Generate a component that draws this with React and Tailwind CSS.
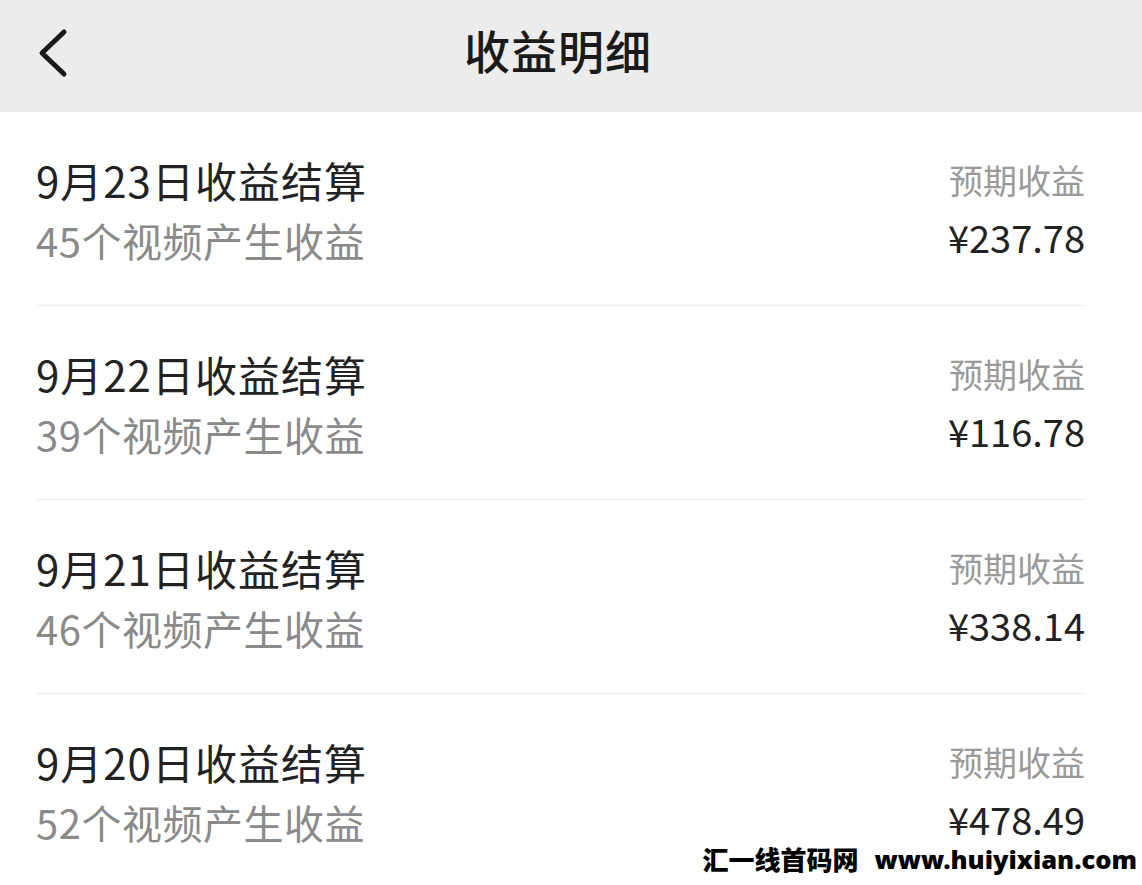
import React from 'react';

const rows = [
  { date: '9月23日收益结算', count: '45个视频产生收益', amount: '¥237.78' },
  { date: '9月22日收益结算', count: '39个视频产生收益', amount: '¥116.78' },
  { date: '9月21日收益结算', count: '46个视频产生收益', amount: '¥338.14' },
  { date: '9月20日收益结算', count: '52个视频产生收益', amount: '¥478.49' },
];

export default function App() {
  return (
    <div
      className="relative w-[1142px] h-[885px] overflow-hidden bg-white"
      style={{ fontFamily: '"Noto Sans CJK SC", "Noto Sans", sans-serif' }}
    >
      {/* header */}
      <div className="relative h-[112px] bg-[#ececec] flex items-center justify-center">
        <button className="absolute left-[32px] top-[28px] w-[40px] h-[50px] flex items-center justify-center">
          <svg width="34" height="50" viewBox="0 0 34 50" fill="none">
            <path d="M29 4 L7 25 L29 46" stroke="#1a1a1a" strokeWidth="5" strokeLinecap="round" strokeLinejoin="round" />
          </svg>
        </button>
        <h1 className="text-[46px] leading-none font-medium text-[#1a1a1a] tracking-[1px] -ml-[26px] -mt-[14px]">收益明细</h1>
      </div>

      {/* list */}
      <div className="ml-[36px] mr-[57px]">
        {rows.map((row, i) => (
          <div
            key={i}
            className={
              'flex justify-between pt-[38px] pb-[35px] ' +
              (i < rows.length - 1 ? 'border-b border-[#ececec]' : '')
            }
          >
            <div>
              <div className="text-[42px] leading-[60px] tracking-[1px] text-[#222222]">{row.date}</div>
              <div className="text-[40px] leading-[60px] tracking-[0.5px] text-[#8a8a8a]">{row.count}</div>
            </div>
            <div className="flex flex-col items-end">
              <div className="text-[34px] leading-[60px] text-[#9a9a9a]">预期收益</div>
              <div className="text-[38px] leading-[54px] text-[#222222]">{row.amount}</div>
            </div>
          </div>
        ))}
      </div>

      {/* watermark */}
      <div className="absolute right-[5px] bottom-[11px] flex items-center gap-[16px] bg-white pl-[12px] text-black font-black leading-[30px]">
        <span className="text-[26px]">汇一线首码网</span>
        <span className="text-[25.5px]" style={{ fontFamily: '"Noto Sans", sans-serif' }}>www.huiyixian.com</span>
      </div>
    </div>
  );
}
